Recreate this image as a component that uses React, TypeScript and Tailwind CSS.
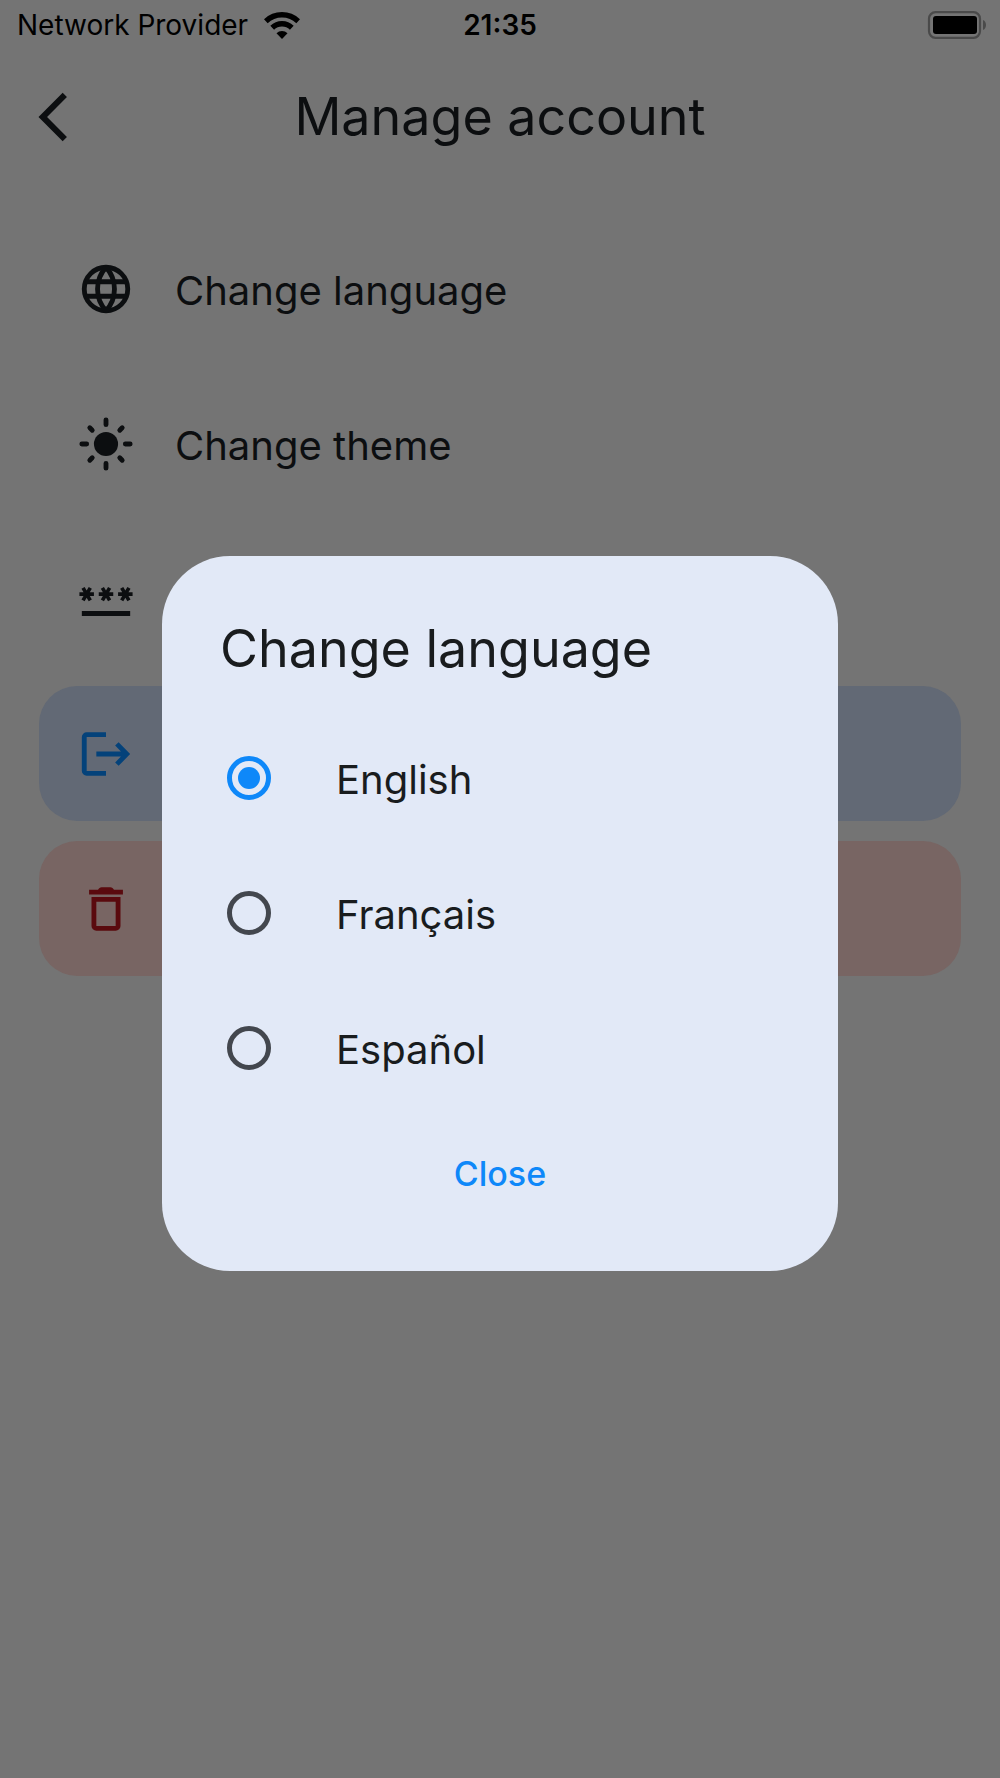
import { useState } from 'react';
import type { ReactNode } from 'react';

const LANGUAGES = [
  { code: 'en', label: 'English' },
  { code: 'fr', label: 'Français' },
  { code: 'es', label: 'Español' },
];

function Icon({ children }: { children: ReactNode }) {
  return (
    <svg
      viewBox="0 0 24 24"
      className="size-[58px] shrink-0"
      fill="none"
      stroke="currentColor"
      strokeWidth="2"
      aria-hidden="true"
    >
      {children}
    </svg>
  );
}

function GlobeIcon() {
  return (
    <Icon>
      <circle cx="12" cy="12" r="9" />
      <path d="M3.5 9h17M3.5 15h17" />
      <path d="M12 3C9.7 5.5 8.5 8.7 8.5 12s1.2 6.5 3.5 9M12 3c2.3 2.5 3.5 5.7 3.5 9s-1.2 6.5-3.5 9" />
    </Icon>
  );
}

function SunIcon() {
  return (
    <Icon>
      <circle cx="12" cy="12" r="5" fill="currentColor" stroke="none" />
      <path
        strokeLinecap="round"
        d="M12 2v2M12 20v2M2 12h2M20 12h2M5.3 5.3l1 1M17.7 17.7l1 1M5.3 18.7l1-1M17.7 6.3l1-1"
      />
    </Icon>
  );
}

function PasswordIcon() {
  return (
    <Icon>
      <path
        fill="currentColor"
        stroke="none"
        d="M2 17h20v2H2v-2zm1.15-4.05L4 11.47l.85 1.48 1.3-.75-.85-1.48H7v-1.5H5.3l.85-1.47L4.85 7 4 8.47 3.15 7l-1.3.75.85 1.47H1v1.5h1.7l-.85 1.48 1.3.75zm6.7-.75l1.3.75.85-1.48.85 1.48 1.3-.75-.85-1.48H15v-1.5h-1.7l.85-1.47-1.3-.75L12 8.47 11.15 7l-1.3.75.85 1.47H9v1.5h1.7l-.85 1.48zM23 9.22h-1.7l.85-1.47-1.3-.75L20 8.47 19.15 7l-1.3.75.85 1.47H17v1.5h1.7l-.85 1.48 1.3.75.85-1.48.85 1.48 1.3-.75-.85-1.48H23v-1.5z"
      />
    </Icon>
  );
}

function LogoutIcon() {
  return (
    <Icon>
      <path d="M12 4H4a1 1 0 0 0-1 1v14a1 1 0 0 0 1 1h8" />
      <path d="M8 12h12.4M16.5 7.8l4.1 4.2-4.1 4.2" />
    </Icon>
  );
}

function TrashIcon() {
  return (
    <Icon>
      <path
        fill="currentColor"
        stroke="none"
        d="M5 4h3.7c.4-.6.8-1 1.5-1h3.6c.7 0 1.1.4 1.5 1H19v2H5z"
      />
      <path d="M7 8h10v11a1 1 0 0 1-1 1H8a1 1 0 0 1-1-1z" />
    </Icon>
  );
}

function StatusBar() {
  return (
    <div className="grid h-[50px] grid-cols-3 items-center px-[13px] text-[28px] leading-[34px] text-black">
      <div className="flex items-center gap-4 whitespace-nowrap pl-1">
        <span>Network Provider</span>
        <svg viewBox="0 0 36 27" className="h-[27px] w-9 shrink-0" aria-hidden="true">
          <g fill="none" stroke="currentColor" strokeWidth="5.4">
            <path d="M1.8 9.2a23.5 23.5 0 0 1 32.4 0" />
            <path d="M8.2 15.7a14.2 14.2 0 0 1 19.6 0" />
          </g>
          <path d="M12.5 21.2a8 8 0 0 1 11 0L18 27z" fill="currentColor" />
        </svg>
      </div>
      <span className="text-center font-semibold">21:35</span>
      <svg viewBox="0 0 60 28" className="h-7 w-[60px] justify-self-end" aria-hidden="true">
        <rect x="2" y="1.2" width="51" height="25.6" rx="6.5" fill="none" stroke="#4a4a4a" strokeWidth="2.2" />
        <rect x="6" y="5" width="44" height="18" rx="3" fill="#000" />
        <path d="M56 9v10c2-.8 3-2.8 3-5s-1-4.2-3-5z" fill="#4a4a4a" />
      </svg>
    </div>
  );
}

interface MenuRowProps {
  icon: ReactNode;
  label?: string;
  name: string;
  tone?: string;
}

function MenuRow({ icon, label, name, tone = 'text-[#0c0e10]' }: MenuRowProps) {
  return (
    <button
      type="button"
      aria-label={name}
      className={`flex h-[135px] w-full items-center gap-10 rounded-[38px] px-[38px] text-left text-[40px] leading-[58px] ${tone}`}
    >
      {icon}
      {label && <span className="pt-1">{label}</span>}
    </button>
  );
}

function LanguageDialog() {
  const [language, setLanguage] = useState('en');

  return (
    <div className="fixed inset-0 flex items-center justify-center px-[162px] pt-12">
      <div
        role="dialog"
        aria-modal="true"
        aria-labelledby="language-title"
        className="w-full rounded-[68px] bg-[#e2e9f7] pt-[58px] pb-[39px] text-[#191c1e]"
      >
        <h2 id="language-title" className="px-[58px] text-[52px] leading-[70px]">
          Change language
        </h2>

        <div className="mt-[27px]">
          {LANGUAGES.map(({ code, label }) => (
            <label
              key={code}
              className="flex h-[135px] items-center gap-[65px] px-[65px] text-[40px] leading-[58px]"
            >
              <input
                type="radio"
                name="language"
                value={code}
                checked={language === code}
                onChange={() => setLanguage(code)}
                className="grid size-11 shrink-0 appearance-none place-content-center rounded-full border-5 border-[#43474e] checked:border-[#0e88f9] checked:before:size-[22px] checked:before:rounded-full checked:before:bg-[#0e88f9] checked:before:content-['']"
              />
              <span className="pt-1">{label}</span>
            </label>
          ))}
        </div>

        <div className="flex justify-center">
          <button
            type="button"
            className="h-[116px] px-7 text-[34px] leading-[48px] font-medium text-[#0e88f9]"
          >
            Close
          </button>
        </div>
      </div>
    </div>
  );
}

export default function App() {
  return (
    <div className="min-h-screen bg-[#747474] font-['Inter',sans-serif]">
      <StatusBar />

      <header className="grid h-[134px] grid-cols-[58px_1fr_58px] items-center px-6 text-[#0c0e10]">
        <button type="button" aria-label="Back">
          <Icon>
            <path
              fill="currentColor"
              stroke="none"
              d="M17.77 3.77L16 2 6 12l10 10 1.77-1.77L9.54 12z"
            />
          </Icon>
        </button>
        <h1 className="text-center text-[52px] leading-[70px]">Manage account</h1>
      </header>

      <main className="flex flex-col gap-5 px-[39px] pt-[37px]">
        <MenuRow icon={<GlobeIcon />} name="Change language" label="Change language" />
        <MenuRow icon={<SunIcon />} name="Change theme" label="Change theme" />
        <MenuRow icon={<PasswordIcon />} name="Change password" />
        <MenuRow icon={<LogoutIcon />} name="Log out" tone="bg-[#626975] text-[#04427a]" />
        <MenuRow icon={<TrashIcon />} name="Delete account" tone="bg-[#786563] text-[#5a0a0e]" />
      </main>

      <LanguageDialog />
    </div>
  );
}
